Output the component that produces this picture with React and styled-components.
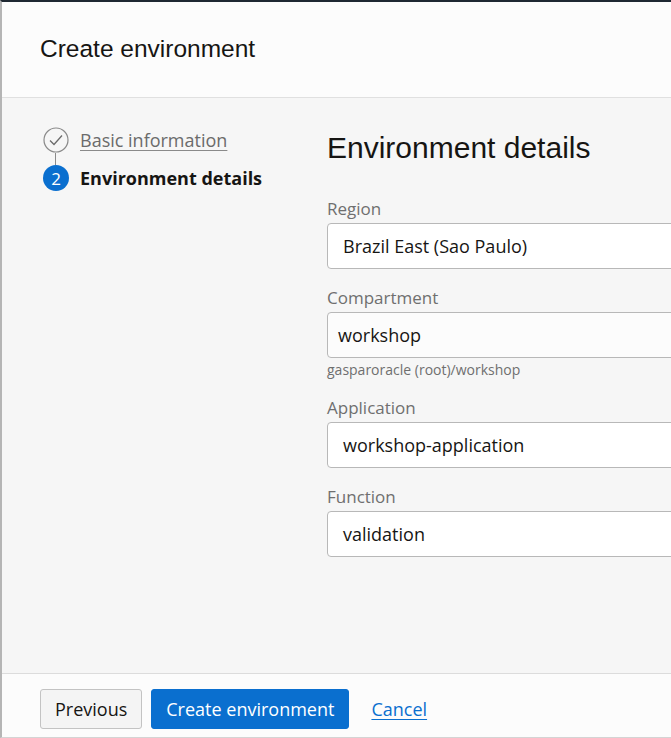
import React from 'react';
import styled, { createGlobalStyle } from 'styled-components';

const GlobalStyle = createGlobalStyle`
  html, body {
    margin: 0;
    padding: 0;
    background: #ffffff;
    overflow: hidden;
  }
`;

const uiFont = `"Open Sans", "Noto Sans", sans-serif`;
const headFont = `"Liberation Sans", Arial, sans-serif`;

const Panel = styled.div`
  width: 900px;
  height: 738px;
  box-sizing: border-box;
  border-top: 2px solid #1f2832;
  border-left: 2px solid #b5b5b5;
  border-bottom: 1px solid #d4d4d4;
  display: flex;
  flex-direction: column;
  font-family: ${uiFont};
`;

const Header = styled.header`
  height: 95px;
  flex: none;
  display: flex;
  align-items: center;
  padding-left: 38px;
  background: #fcfcfc;
  border-bottom: 1px solid #e0e0e0;
`;

const Title = styled.h1`
  margin: 0 0 1px;
  font-family: ${headFont};
  font-weight: 400;
  font-size: 24.5px;
  color: #161513;
`;

const Body = styled.main`
  flex: 1;
  display: flex;
  background: #f6f6f6;
  padding-top: 29px;
`;

const Steps = styled.ol`
  list-style: none;
  margin: 0;
  padding: 0 0 0 41px;
  width: 284px;
  flex: none;
`;

const Step = styled.li`
  display: flex;
  align-items: center;
  gap: 11px;
  height: 26px;
  margin-bottom: ${p => (p.$last ? 0 : '12px')};
  position: relative;
`;

const Connector = styled.span`
  position: absolute;
  left: 12px;
  top: 26px;
  width: 1px;
  height: 12px;
  background: #8a8a8a;
`;

const Badge = styled.span`
  width: 26px;
  height: 26px;
  flex: none;
  border-radius: 50%;
  background: #0a6fcf;
  color: #ffffff;
  display: flex;
  align-items: center;
  justify-content: center;
  font-size: 17px;
`;

const StepLink = styled.a`
  font-size: 18px;
  color: #6b6b6b;
  text-decoration: underline;
  text-underline-offset: 3px;
  text-decoration-color: #8a8a8a;
`;

const StepCurrent = styled.span`
  font-size: 18px;
  font-weight: 700;
  color: #161513;
`;

const Form = styled.section`
  flex: 1;
  padding-top: 4px;
`;

const Heading = styled.h2`
  margin: 0 0 33px;
  font-family: ${headFont};
  font-weight: 400;
  font-size: 30px;
  color: #161513;
`;

const Field = styled.div`
  margin-bottom: 18px;
`;

const Label = styled.div`
  font-size: 17px;
  color: #6f6f6f;
  line-height: 22px;
  margin-bottom: 3px;
`;

const Input = styled.div`
  width: 420px;
  height: 46px;
  box-sizing: border-box;
  border: 1px solid #b8b8b8;
  border-radius: 4px;
  background: ${p => (p.$muted ? '#fcfcfc' : '#ffffff')};
  display: flex;
  align-items: center;
  padding-left: ${p => (p.$tight ? '10px' : '15px')};
  font-size: 18px;
  color: #161513;
`;

const Help = styled.div`
  font-size: 14px;
  line-height: 19px;
  color: #6f6f6f;
  margin-top: 2px;
`;

const Footer = styled.footer`
  height: 64px;
  flex: none;
  box-sizing: border-box;
  display: flex;
  align-items: flex-start;
  gap: 9px;
  padding: 15px 0 0 38px;
  background: #fcfcfc;
  border-top: 1px solid #dcdcdc;
`;

const Button = styled.button`
  height: 40px;
  padding: 0 14px;
  border-radius: 3px;
  font-family: ${uiFont};
  font-size: 18px;
  cursor: pointer;
  border: 1px solid ${p => (p.$primary ? '#0a6fcf' : '#c3c3c3')};
  background: ${p => (p.$primary ? '#0a6fcf' : '#f4f4f4')};
  color: ${p => (p.$primary ? '#ffffff' : '#161513')};
`;

const Cancel = styled.a`
  margin-left: 13px;
  line-height: 40px;
  font-size: 18px;
  color: #0a6fcf;
  text-decoration: underline;
  text-underline-offset: 3px;
`;

const CheckCircle = () => (
  <svg width="26" height="26" viewBox="0 0 26 26">
    <circle cx="13" cy="13" r="12" fill="none" stroke="#8a8a8a" strokeWidth="1.2" />
    <path d="M7 13.5 L11 17.5 L19 8.5" fill="none" stroke="#6b6b6b" strokeWidth="1.3" />
  </svg>
);

const fields = [
  { label: 'Region', value: 'Brazil East (Sao Paulo)' },
  { label: 'Compartment', value: 'workshop', tight: true, muted: true, help: 'gasparoracle (root)/workshop' },
  { label: 'Application', value: 'workshop-application' },
  { label: 'Function', value: 'validation' },
];

export default function App() {
  return (
    <>
      <GlobalStyle />
      <Panel>
        <Header>
          <Title>Create environment</Title>
        </Header>
        <Body>
          <Steps>
            <Step>
              <CheckCircle />
              <StepLink href="#">Basic information</StepLink>
              <Connector />
            </Step>
            <Step $last>
              <Badge>2</Badge>
              <StepCurrent>Environment details</StepCurrent>
            </Step>
          </Steps>
          <Form>
            <Heading>Environment details</Heading>
            {fields.map(f => (
              <Field key={f.label}>
                <Label>{f.label}</Label>
                <Input $tight={f.tight} $muted={f.muted}>{f.value}</Input>
                {f.help && <Help>{f.help}</Help>}
              </Field>
            ))}
          </Form>
        </Body>
        <Footer>
          <Button>Previous</Button>
          <Button $primary>Create environment</Button>
          <Cancel href="#">Cancel</Cancel>
        </Footer>
      </Panel>
    </>
  );
}
